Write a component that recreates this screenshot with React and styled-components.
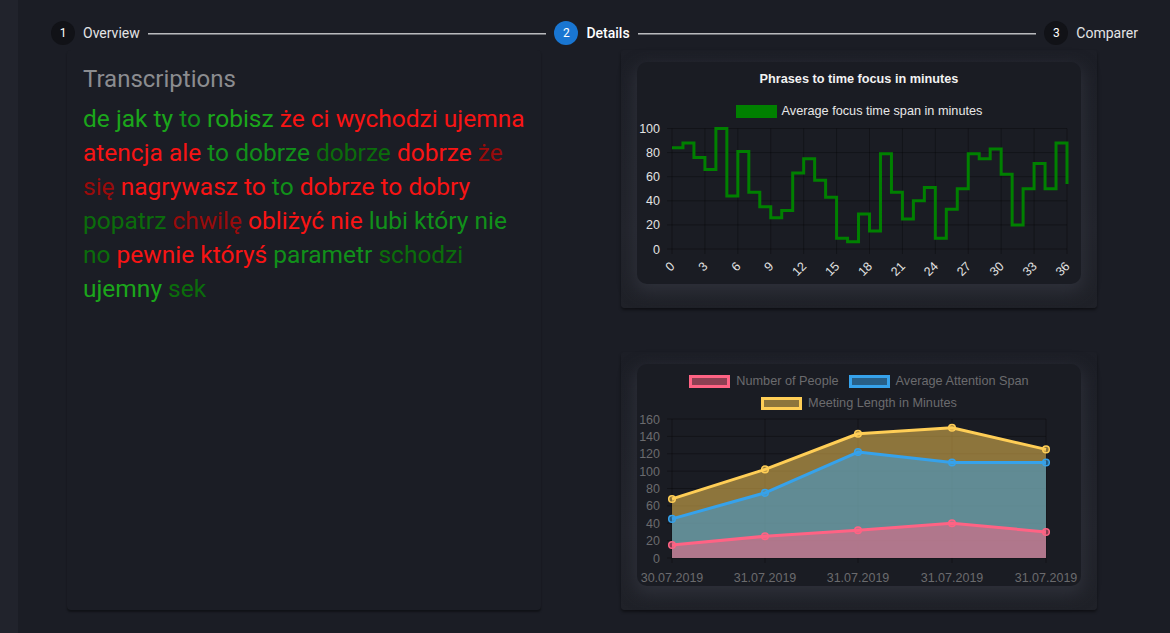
import React from "react";
import styled, { createGlobalStyle } from "styled-components";

const GlobalStyle = createGlobalStyle`
  html, body { margin: 0; padding: 0; background: #1b1d25; }
  body { font-family: Roboto, "Noto Sans", sans-serif; }
  * { box-sizing: border-box; }
`;

const Page = styled.div`
  display: flex;
  min-height: 633px;
  background: #1b1d25;
`;

const Strip = styled.div`
  width: 18px;
  flex: none;
  background: #21232c;
`;

const Main = styled.div`
  flex: 1;
  padding: 21px 24px 0 25px;
`;

const Stepper = styled.div`
  display: flex;
  align-items: center;
  height: 24px;
`;

const Step = styled.div`
  display: flex;
  align-items: center;
  padding: 0 8px;
  flex: none;
`;

const StepCircle = styled.div`
  width: 24px;
  height: 24px;
  border-radius: 50%;
  background: ${(p) => (p.$active ? "#1976d2" : "#111217")};
  color: #fff;
  font-size: 12px;
  display: flex;
  align-items: center;
  justify-content: center;
  margin-right: 8px;
`;

const StepLabel = styled.span`
  font-size: 14px;
  color: ${(p) => (p.$active ? "#ffffff" : "#e4e4e6")};
  font-weight: ${(p) => (p.$active ? 500 : 400)};
`;

const Connector = styled.div`
  flex: 1;
  height: 1px;
  background: #b9babd;
  box-shadow: 0 1px 0 #6d6f75;
`;

const Content = styled.div`
  display: grid;
  grid-template-columns: 474px 476px;
  column-gap: 80px;
  margin: 5px 0 0 24px;
`;

const TextCard = styled.div`
  height: 560px;
  border-radius: 4px;
  background: #1b1d25;
  box-shadow: 0 2px 2px rgba(0, 0, 0, 0.4);
  padding: 13px 16px;
`;

const Title = styled.h5`
  margin: 0;
  font-size: 24px;
  line-height: 32px;
  font-weight: 400;
  color: #8b8c90;
`;

const Words = styled.p`
  margin: 7px 0 0;
  font-size: 24.5px;
  line-height: 34px;
`;

const TONES = {
  G: "#1ba61b",
  g: "#11901a",
  d: "#0b6c0b",
  R: "#f81414",
  r: "#990b0b",
};

const Word = styled.span`
  color: ${(p) => TONES[p.$tone]};
`;

const Column = styled.div`
  display: flex;
  flex-direction: column;
  gap: 44px;
`;

const ChartCard = styled.div`
  height: 258px;
  border-radius: 4px;
  padding: 12px 16px 24px;
  background: linear-gradient(180deg, #1c1e26 0%, #22242c 70%, #1f2128 100%);
  box-shadow: 0 2px 3px rgba(0, 0, 0, 0.45);
`;

const ChartBox = styled.div`
  height: 222px;
  border-radius: 10px;
  background: #1a1c23;
  box-shadow: 0 6px 16px 2px rgba(48, 50, 60, 0.85);
  display: flex;
  flex-direction: column;
  font-family: "Liberation Sans", Arial, sans-serif;
`;

const ChartTitle = styled.div`
  padding: 9px 0 7px;
  line-height: 16px;
  font-size: 12.7px;
  font-weight: 700;
  color: #f2f2f2;
  text-align: center;
`;

const LegendRow = styled.div`
  display: flex;
  justify-content: center;
  align-items: center;
  gap: 10px;
  height: ${(p) => p.$h}px;
  margin-top: ${(p) => p.$mt || 0}px;
`;

const LegendItem = styled.div`
  display: flex;
  align-items: center;
  gap: ${(p) => p.$gap || 6}px;
  font-size: 12.7px;
  color: ${(p) => p.$color};
`;

const Swatch = styled.span`
  width: 41px;
  height: 13px;
  border: 3px solid ${(p) => p.$stroke};
  background: ${(p) => p.$fill};
`;

const Plot = styled.svg`
  display: block;
  overflow: visible;
  font-family: "Liberation Sans", Arial, sans-serif;
`;

const focus = [84, 88, 76, 66, 100, 44, 81, 47, 35, 26, 32, 63, 75, 57, 43, 9, 6, 29, 15, 79, 47, 25, 40, 51, 9, 33, 50, 79, 75, 83, 62, 20, 50, 71, 50, 88, 54];

function FocusChart() {
  const x = (i) => 35 + (i * 395) / 36;
  const y = (v) => 0.5 + (100 - v) * 1.205;
  let d = `M${x(0)} ${y(focus[0])}`;
  for (let i = 1; i < focus.length; i++) d += ` H${x(i)} V${y(focus[i])}`;
  const yt = [0, 20, 40, 60, 80, 100];
  const xt = [];
  for (let i = 0; i <= 36; i += 3) xt.push(i);
  return (
    <ChartBox>
      <ChartTitle>Phrases to time focus in minutes</ChartTitle>
      <LegendRow $h={34}>
        <LegendItem $color="#e8e8e8" $gap={5}>
          <Swatch $stroke="#008000" $fill="#008000" />
          Average focus time span in minutes
        </LegendItem>
      </LegendRow>
      <Plot width="444" height="156" viewBox="0 0 444 156">
        {yt.map((v) => (
          <line key={"h" + v} x1={30} x2={x(36)} y1={y(v)} y2={y(v)} stroke="rgba(0,0,0,0.3)" />
        ))}
        {xt.map((i) => (
          <line key={"v" + i} x1={x(i)} x2={x(i)} y1={y(100)} y2={y(0) + 5} stroke="rgba(0,0,0,0.3)" />
        ))}
        {yt.map((v) => (
          <text key={"yl" + v} x={23} y={y(v) + 4.5} fontSize="12.5" fill="#e2e2e2" textAnchor="end">
            {v}
          </text>
        ))}
        {xt.map((i) => (
          <text
            key={"xl" + i}
            x={x(i) + 3.5}
            y={139}
            fontSize="12.5"
            fill="#e2e2e2"
            textAnchor="end"
            transform={`rotate(-45 ${x(i) + 3.5} 139)`}
          >
            {i}
          </text>
        ))}
        <path d={d} fill="none" stroke="#008000" strokeWidth="3" />
      </Plot>
    </ChartBox>
  );
}

const people = [15, 25, 32, 40, 30];
const attention = [45, 75, 122, 110, 110];
const meeting = [68, 102, 143, 150, 125];
const xs = [35, 128, 221, 315, 409];
const dates = ["30.07.2019", "31.07.2019", "31.07.2019", "31.07.2019", "31.07.2019"];

function MeetingChart() {
  const y = (v) => 5 + ((160 - v) * 139) / 160;
  const line = (arr) => arr.map((v, i) => `${i ? "L" : "M"}${xs[i]} ${y(v)}`).join(" ");
  const area = (arr) => `${line(arr)} L${xs[4]} ${y(0)} L${xs[0]} ${y(0)} Z`;
  const sets = [
    { data: meeting, c: "#ffce56", f: "rgba(255,206,86,0.5)" },
    { data: attention, c: "#36a2eb", f: "rgba(54,162,235,0.5)" },
    { data: people, c: "#ff6384", f: "rgba(255,99,132,0.5)" },
  ];
  const yt = [0, 20, 40, 60, 80, 100, 120, 140, 160];
  return (
    <ChartBox>
      <LegendRow $h={22} $mt={6}>
        <LegendItem $color="#6b6b6e">
          <Swatch $stroke="#ff6384" $fill="rgba(255,99,132,0.5)" />
          Number of People
        </LegendItem>
        <LegendItem $color="#6b6b6e">
          <Swatch $stroke="#36a2eb" $fill="rgba(54,162,235,0.5)" />
          Average Attention Span
        </LegendItem>
      </LegendRow>
      <LegendRow $h={22}>
        <LegendItem $color="#6b6b6e">
          <Swatch $stroke="#ffce56" $fill="rgba(255,206,86,0.5)" />
          Meeting Length in Minutes
        </LegendItem>
      </LegendRow>
      <Plot width="444" height="172" viewBox="0 0 444 172">
        {yt.map((v) => (
          <line key={"h" + v} x1={30} x2={xs[4]} y1={y(v)} y2={y(v)} stroke="rgba(0,0,0,0.3)" />
        ))}
        {xs.map((xx) => (
          <line key={"v" + xx} x1={xx} x2={xx} y1={y(160)} y2={y(0) + 5} stroke="rgba(0,0,0,0.3)" />
        ))}
        {sets.map((s) => (
          <path key={"a" + s.c} d={area(s.data)} fill={s.f} />
        ))}
        {sets.map((s) => (
          <g key={"l" + s.c}>
            <path d={line(s.data)} fill="none" stroke={s.c} strokeWidth="3" strokeLinejoin="round" />
            {s.data.map((v, i) => (
              <circle key={i} cx={xs[i]} cy={y(v)} r="3.3" fill={s.f} stroke={s.c} strokeWidth="1.5" />
            ))}
          </g>
        ))}
        {yt.map((v) => (
          <text key={"yl" + v} x={23} y={y(v) + 4.5} fontSize="12.5" fill="#6b6b6e" textAnchor="end">
            {v}
          </text>
        ))}
        {xs.map((xx, i) => (
          <text key={"xl" + i} x={xx} y={167.5} fontSize="12.5" fill="#6b6b6e" textAnchor="middle">
            {dates[i]}
          </text>
        ))}
      </Plot>
    </ChartBox>
  );
}

const lines = [
  [["de", "G"], ["jak", "G"], ["ty", "G"], ["to", "g"], ["robisz", "G"], ["że", "R"], ["ci", "R"], ["wychodzi", "R"], ["ujemna", "R"]],
  [["atencja", "R"], ["ale", "R"], ["to", "g"], ["dobrze", "g"], ["dobrze", "d"], ["dobrze", "R"], ["że", "r"]],
  [["się", "r"], ["nagrywasz", "R"], ["to", "R"], ["to", "g"], ["dobrze", "R"], ["to", "R"], ["dobry", "R"]],
  [["popatrz", "d"], ["chwilę", "r"], ["obliżyć", "R"], ["nie", "R"], ["lubi", "g"], ["który", "g"], ["nie", "g"]],
  [["no", "d"], ["pewnie", "R"], ["któryś", "R"], ["parametr", "g"], ["schodzi", "d"]],
  [["ujemny", "G"], ["sek", "d"]],
];
const words = lines.flat();

export default function App() {
  return (
    <>
      <GlobalStyle />
      <Page>
        <Strip />
        <Main>
          <Stepper>
            <Step>
              <StepCircle>1</StepCircle>
              <StepLabel>Overview</StepLabel>
            </Step>
            <Connector />
            <Step>
              <StepCircle $active>2</StepCircle>
              <StepLabel $active>Details</StepLabel>
            </Step>
            <Connector />
            <Step>
              <StepCircle>3</StepCircle>
              <StepLabel>Comparer</StepLabel>
            </Step>
          </Stepper>
          <Content>
            <TextCard>
              <Title>Transcriptions</Title>
              <Words>
                {words.map(([w, t], i) => (
                  <React.Fragment key={i}>
                    <Word $tone={t}>{w}</Word>
                    {i < words.length - 1 ? " " : ""}
                  </React.Fragment>
                ))}
              </Words>
            </TextCard>
            <Column>
              <ChartCard>
                <FocusChart />
              </ChartCard>
              <ChartCard>
                <MeetingChart />
              </ChartCard>
            </Column>
          </Content>
        </Main>
      </Page>
    </>
  );
}
